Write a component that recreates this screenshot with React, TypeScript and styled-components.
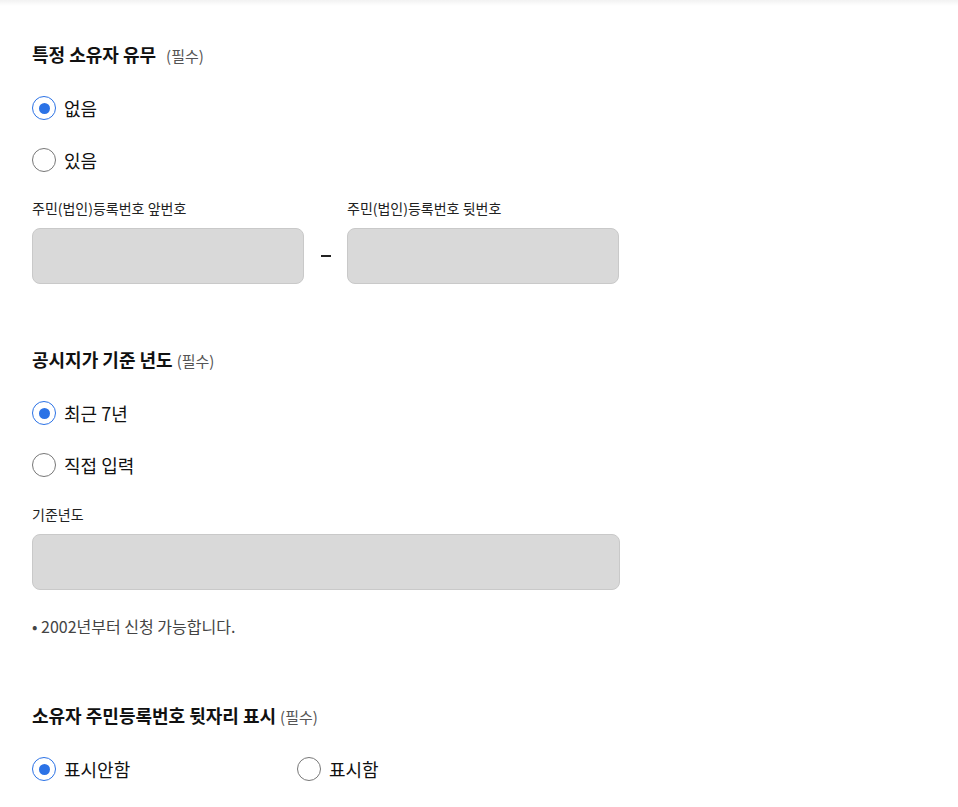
import React, { useState } from "react";
import styled, { createGlobalStyle } from "styled-components";

const GlobalStyle = createGlobalStyle`
  html, body { margin: 0; padding: 0; background: #fff; }
  body {
    font-family: "Noto Sans CJK KR", "Noto Sans", sans-serif;
    color: #111;
    -webkit-font-smoothing: antialiased;
  }
  * { box-sizing: border-box; }
`;

const Page = styled.div`
  position: relative;
  width: 958px;
  min-height: 807px;
  padding: 42px 32px 0 32px;
`;

const TopShade = styled.div`
  position: absolute;
  top: 0;
  left: 0;
  right: 0;
  height: 6px;
  background: linear-gradient(to bottom, rgba(0, 0, 0, 0.05), rgba(0, 0, 0, 0));
`;

const Section = styled.section<{ $gapTop?: number }>`
  display: flex;
  flex-direction: column;
  margin-top: ${(p) => p.$gapTop ?? 0}px;
`;

const Title = styled.h2`
  margin: 0;
  font-size: 18px;
  line-height: 24px;
  font-weight: 700;
  color: #111;
  display: flex;
  align-items: baseline;
`;

const Required = styled.span<{ $gap: number }>`
  margin-left: ${(p) => p.$gap}px;
  font-size: 15px;
  font-weight: 400;
  color: #555;
`;

const RadioList = styled.div<{ $row?: boolean }>`
  margin-top: 28px;
  display: ${(p) => (p.$row ? "grid" : "flex")};
  flex-direction: column;
  grid-template-columns: 265px 265px;
  row-gap: 28px;
  column-gap: 0;
`;

const RadioLabel = styled.label`
  display: flex;
  align-items: center;
  gap: 8px;
  height: 24px;
  cursor: pointer;
  font-size: 18px;
  color: #111;
`;

const HiddenInput = styled.input`
  position: absolute;
  opacity: 0;
  width: 0;
  height: 0;
`;

const Circle = styled.span<{ $checked: boolean }>`
  width: 24px;
  height: 24px;
  flex: none;
  border-radius: 50%;
  border: ${(p) => (p.$checked ? "1.5px solid #2b72e6" : "1px solid #777")};
  background: #fff;
  display: flex;
  align-items: center;
  justify-content: center;
  &::after {
    content: "";
    width: 11px;
    height: 11px;
    border-radius: 50%;
    background: #2b72e6;
    display: ${(p) => (p.$checked ? "block" : "none")};
  }
`;

const FieldGrid = styled.div<{ $cols: string; $gapTop: number }>`
  margin-top: ${(p) => p.$gapTop}px;
  display: grid;
  grid-template-columns: ${(p) => p.$cols};
  grid-template-rows: 20px 56px;
  row-gap: 10px;
`;

const FieldLabel = styled.div`
  font-size: 14px;
  line-height: 20px;
  color: #222;
`;

const Box = styled.input`
  width: 100%;
  height: 56px;
  border-radius: 8px;
  border: 1px solid #c9c9c9;
  background: #d9d9d9;
  font: inherit;
  padding: 0 16px;
`;

const DashCell = styled.div`
  display: flex;
  align-items: center;
  justify-content: center;
  &::before {
    content: "";
    width: 10px;
    height: 2px;
    margin-left: 1px;
    background: #222;
  }
`;

const Note = styled.p`
  margin: 26px 0 0;
  font-size: 16px;
  line-height: 20px;
  color: #444;
`;

type Opt = { value: string; label: string };

function RadioGroup({
  name,
  options,
  value,
  onChange,
  row,
}: {
  name: string;
  options: Opt[];
  value: string;
  onChange: (v: string) => void;
  row?: boolean;
}) {
  return (
    <RadioList $row={row}>
      {options.map((o) => (
        <RadioLabel key={o.value}>
          <HiddenInput
            type="radio"
            name={name}
            checked={value === o.value}
            onChange={() => onChange(o.value)}
          />
          <Circle $checked={value === o.value} />
          {o.label}
        </RadioLabel>
      ))}
    </RadioList>
  );
}

export default function App() {
  const [owner, setOwner] = useState("none");
  const [year, setYear] = useState("recent");
  const [show, setShow] = useState("hide");

  return (
    <>
      <GlobalStyle />
      <Page>
        <TopShade />
        <Section>
          <Title>
            특정 소유자 유무<Required $gap={10}>(필수)</Required>
          </Title>
          <RadioGroup
            name="owner"
            value={owner}
            onChange={setOwner}
            options={[
              { value: "none", label: "없음" },
              { value: "yes", label: "있음" },
            ]}
          />
          <FieldGrid $cols="272px 43px 272px" $gapTop={26}>
            <FieldLabel>주민(법인)등록번호 앞번호</FieldLabel>
            <div />
            <FieldLabel>주민(법인)등록번호 뒷번호</FieldLabel>
            <Box disabled />
            <DashCell />
            <Box disabled />
          </FieldGrid>
        </Section>

        <Section $gapTop={63}>
          <Title>
            공시지가 기준 년도<Required $gap={4}>(필수)</Required>
          </Title>
          <RadioGroup
            name="year"
            value={year}
            onChange={setYear}
            options={[
              { value: "recent", label: "최근 7년" },
              { value: "custom", label: "직접 입력" },
            ]}
          />
          <FieldGrid $cols="588px" $gapTop={27}>
            <FieldLabel>기준년도</FieldLabel>
            <Box disabled />
          </FieldGrid>
          <Note>• 2002년부터 신청 가능합니다.</Note>
        </Section>

        <Section $gapTop={67}>
          <Title>
            소유자 주민등록번호 뒷자리 표시<Required $gap={4}>(필수)</Required>
          </Title>
          <RadioGroup
            name="show"
            row
            value={show}
            onChange={setShow}
            options={[
              { value: "hide", label: "표시안함" },
              { value: "show", label: "표시함" },
            ]}
          />
        </Section>
      </Page>
    </>
  );
}
